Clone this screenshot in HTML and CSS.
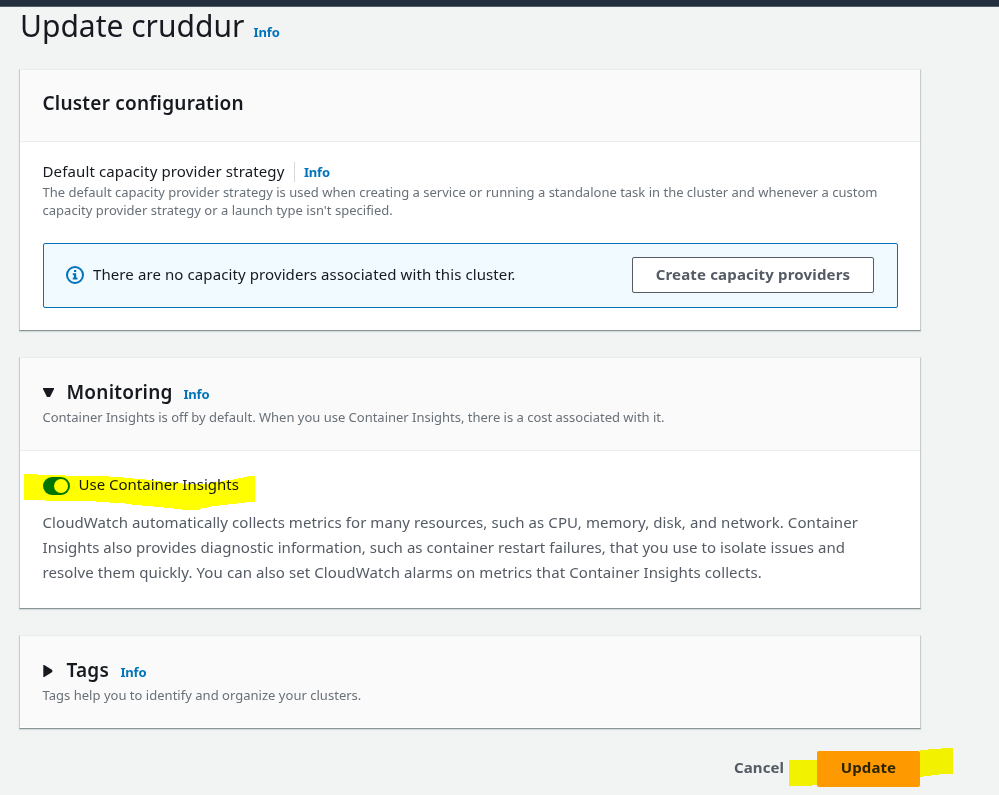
FILE: index.html
```html
<!DOCTYPE html>
<html lang="en">
<head>
<meta charset="utf-8">
<title>Update cruddur</title>
<link rel="stylesheet" href="styles.css">
</head>
<body>
<header class="topbar"></header>
<main class="page">
  <div class="title-row"><h1>Update cruddur</h1><a class="info">Info</a></div>

  <section class="card config">
    <div class="card-head"><h2 class="config-title">Cluster configuration</h2></div>
    <div class="card-body">
      <div class="field-label"><span class="label-text">Default capacity provider strategy</span><a class="info divided">Info</a></div>
      <p class="hint"><span class="hint-a">The default capacity provider strategy is used when creating a service or running a standalone task in the cluster and whenever a custom</span><br><span class="hint-b">capacity provider strategy or a launch type isn't specified.</span></p>
      <div class="alert">
        <svg class="info-icon" viewBox="0 0 18 18" width="18" height="18"><circle cx="9" cy="9" r="8" fill="none" stroke="#0073bb" stroke-width="2"/><path d="M8 4h2.2v2H8zM6.8 7.3h3.4v4.2h1.2v1.9H6.8v-1.9H8V9.2H6.8z" fill="#0073bb"/></svg>
        <span class="alert-text">There are no capacity providers associated with this cluster.</span>
        <button class="btn"><span>Create capacity providers</span></button>
      </div>
    </div>
  </section>

  <section class="card monitoring">
    <div class="card-head">
      <div class="head-row"><svg class="caret" viewBox="0 0 12 12" width="12" height="12"><path d="M0 1h11v1L7 10H4L0 2z" fill="#16191f"/></svg><h2 class="mon-title">Monitoring</h2><a class="info">Info</a></div>
      <p class="hint mon-hint">Container Insights is off by default. When you use Container Insights, there is a cost associated with it.</p>
    </div>
    <div class="card-body">
      <div class="toggle-row">
        <span class="toggle"><i></i></span><span class="toggle-text">Use Container Insights</span>
        <svg class="marker" viewBox="0 0 232 37" width="232" height="37"><path d="M0 0H13V1H41V2H86V3H100V4H110V5H121V6H128V7H138V8H150V9H158V10H186V9H190V8H197V7H201V6H209V5H214V4H219V3H223V2H231V28H222V29H213V30H204V31H195V32H187V33H183V34H177V35H176V36H158V35H149V34H140V33H129V32H118V31H108V30H101V29H86V28H72V27H21V26H0Z" fill="#ff0"/></svg>
      </div>
      <p class="desc"><span class="desc-a">CloudWatch automatically collects metrics for many resources, such as CPU, memory, disk, and network. Container</span><br><span class="desc-b">Insights also provides diagnostic information, such as container restart failures, that you use to isolate issues and</span><br><span class="desc-c">resolve them quickly. You can also set CloudWatch alarms on metrics that Container Insights collects.</span></p>
    </div>
  </section>

  <section class="card tags">
    <div class="card-head">
      <div class="head-row"><svg class="caret" viewBox="0 0 12 12" width="12" height="12"><path d="M.3 0v12h1L9.3 7V5l-8-5z" fill="#16191f"/></svg><h2 class="tags-title">Tags</h2><a class="info">Info</a></div>
      <p class="hint tags-hint">Tags help you to identify and organize your clusters.</p>
    </div>
  </section>

  <div class="actions">
    <a class="cancel">Cancel</a>
    <button class="primary"><span>Update</span></button>
    <svg class="action-marks" viewBox="0 0 164 40" width="164" height="40"><path d="M0 12h28v25h-5v1H0zM131 2h8V1h14V0h11v26h-14v1h-8v1h-8v1h-3z" fill="#f2f200"/></svg>
  </div>
</main>
</body>
</html>
```
FILE: styles.css
```css
* { box-sizing: border-box; }
body { margin: 0; height: 795px; overflow: hidden; background: #f2f3f3; color: #16191f; font-family: "Noto Sans", sans-serif; font-size: 15px; }
h1, h2, p { margin: 0; white-space: nowrap; }
.topbar { height: 7px; background: #232f3e; border-bottom: 1px solid #56606b; }
.page { width: 902px; margin-left: 19px; }
.title-row { display: flex; align-items: baseline; height: 62px; padding-left: 1px; }
h1 { font-size: 30px; font-weight: 400; line-height: 38px; width: 233.5px; }
.info { font-size: 13px; font-weight: 700; color: #0073bb; line-height: 18px; letter-spacing: -0.2px; }
.title-row .info { letter-spacing: -0.1px; }
.card { background: #fff; border: 1px solid #c5cbce; border-top-color: #eaeded; border-bottom-color: #879596; box-shadow: 0 1px 1px #d5dbdb; }
.card-head { background: #fafafa; border-bottom: 1px solid #eaeded; padding-left: 23px; }
.card-body { padding: 0 22px 0 23px; }
.config { height: 262px; }
.config .card-head { height: 72px; padding-top: 20px; }
h2 { font-size: 19px; font-weight: 600; line-height: 26px; letter-spacing: 0.22px; }
.config-title, .hint, .label-text, .desc { margin-left: -0.5px; }
.field-label { display: flex; height: 41px; padding-top: 20px; line-height: 20px; white-space: nowrap; }
.label-text { width: 251.5px; margin-top: -1px; letter-spacing: 0.13px; }
.divided { height: 20px; border-left: 1px solid #d5dbdb; padding-left: 9px; line-height: 20px; }
.hint { font-size: 13px; line-height: 18px; color: #687078; }
.hint-b, .tags-hint { letter-spacing: 0.02px; }
.mon-hint { letter-spacing: -0.01px; }
.alert { display: flex; align-items: center; height: 65px; margin-top: 24px; padding: 0 23px 2px 22px; background: #f1faff; border: 1px solid #0073bb; border-radius: 2px; white-space: nowrap; }
.alert-text { margin: -2px 0 0 9px; flex: 1; letter-spacing: 0.1px; }
.btn { width: 242px; height: 36px; padding: 0 0 1px; background: #fff; border: 1px solid #545b64; border-radius: 2px; color: #545b64; font: 700 15px "Noto Sans", sans-serif; letter-spacing: 0.17px; }
.monitoring { margin-top: 26px; height: 252px; }
.monitoring .card-head { height: 93px; padding-top: 21px; }
.head-row { display: flex; align-items: baseline; height: 29px; }
.caret { width: 12px; height: 12px; margin-right: 11.5px; margin-top: -1px; align-self: center; }
.mon-title { width: 117px; }
.tags-title { width: 54px; }
.toggle-row { position: relative; display: flex; align-items: center; height: 59px; padding-top: 11px; }
.toggle { width: 27px; height: 18px; border-radius: 9px; background: #007500; display: flex; align-items: center; justify-content: flex-end; padding: 2px; }
.toggle i { width: 14px; height: 14px; border-radius: 50%; background: #fff; }
.toggle-text { margin: -4px 0 0 8.5px; white-space: nowrap; }
.marker { position: absolute; left: -19px; top: 23px; mix-blend-mode: multiply; }
.desc { line-height: 25px; color: #545b64; }
.desc-a { letter-spacing: 0.077px; }
.desc-b { letter-spacing: 0.045px; }
.desc-c { letter-spacing: 0.094px; }
.tags { margin-top: 26px; height: 94px; }
.tags .card-head { height: 91px; padding-top: 21px; border-bottom: 0; }
.actions { position: relative; display: flex; justify-content: flex-end; align-items: center; height: 36px; margin-top: 22px; padding-right: 1px; }
.cancel { width: 83px; margin-top: -4px; font-weight: 700; color: #545b64; letter-spacing: 0.1px; }
.primary { width: 103px; height: 36px; padding: 0 0 4px; border: 0; border-radius: 2px; background: #ff9900; color: #2a2500; font: 700 15px "Noto Sans", sans-serif; letter-spacing: 0.1px; }
.action-marks { position: absolute; left: 770px; top: -3px; }
```
